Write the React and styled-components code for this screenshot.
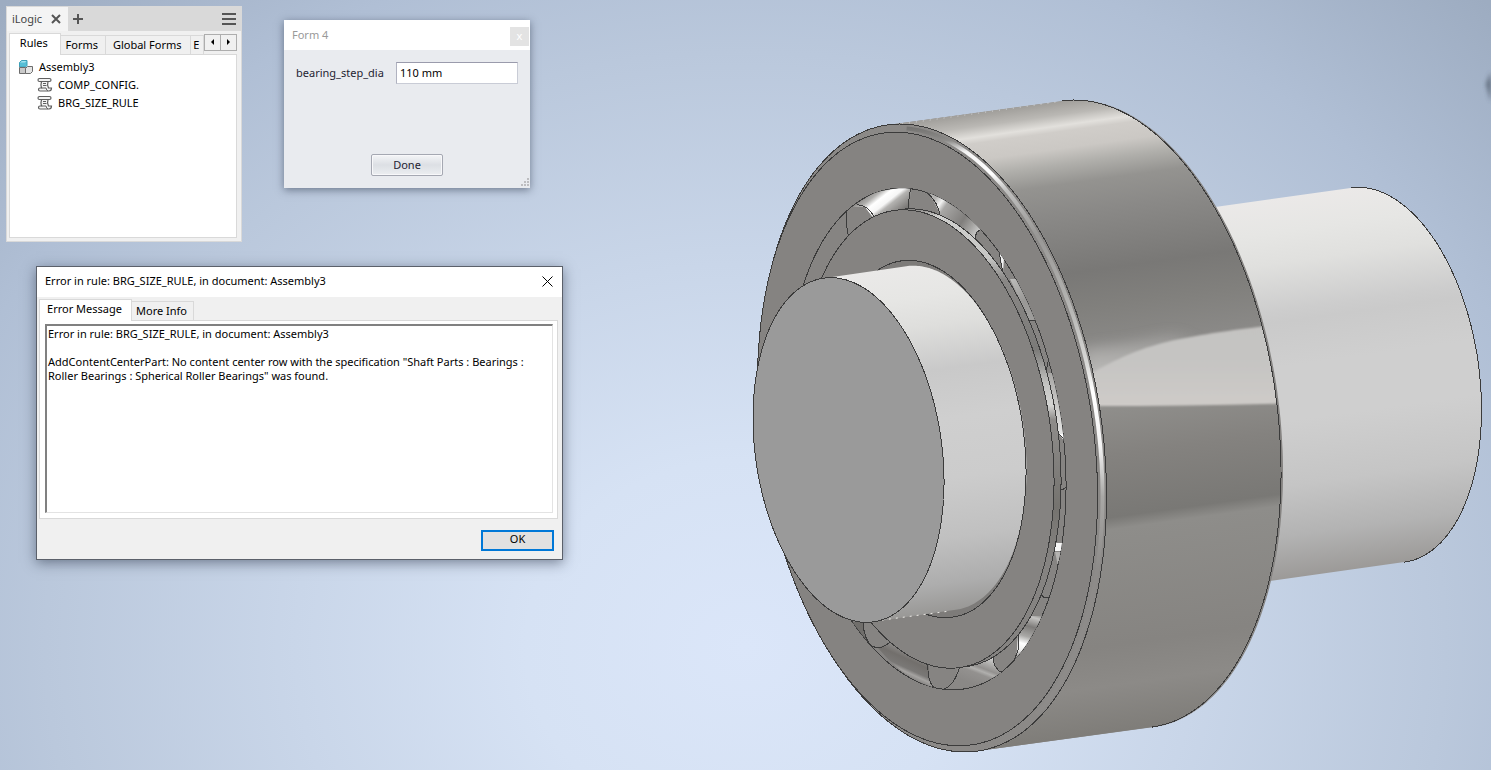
import React, { useState } from 'react'
import styled, { createGlobalStyle } from 'styled-components'

const colors = {
	line: '#3b3b3b',
	steel: '#858381',
	frame: '#d9d9d9',
	panel: '#f0f0f0',
	accent: '#0078d7',
}

// every circle of the model is seen at the same angle
const SKEW = 0.335
const TALL = 1.773

const point = (cx, cy, w, deg) => {
	const t = deg * Math.PI / 180
	const x = cx + w * Math.cos(t)
	const y = cy + SKEW * w * Math.cos(t) + TALL * w * Math.sin(t)
	return `${x.toFixed(1)} ${y.toFixed(1)}`
}

const arc = ([cx, cy, w], from, to) => {
	const points = []
	const step = from < to ? 1 : -1
	for (let deg = from; deg !== to + step; deg += step) {
		points.push(point(cx, cy, w, deg))
	}
	return points.join(' L')
}

const ring = (c) => `M${arc(c, 0, 360)} Z`
const tube = (front, back) => `M${arc(back, -105, 75)} L${arc(front, 75, 255)} Z`

const outerFront = [932.5, 438, 174]
const outerBack = [1107, 414, 174]
const outerRim = [1109, 414, 174]
const face = [927.5, 439, 170]
const opening = [927, 439, 139]
const innerRing = [927, 439, 127]
const innerRace = [934, 438, 127]
const bore = [927, 439, 99]
const shaftFront = [848.5, 450, 95.5]
const shaftEnd = [931, 438, 95.5]
const shoulderFront = [1000, 428, 104]
const shoulderBack = [1377.5, 375, 104]

// stops are given on the axis y + 0.139x, square to the cylinder sides
const Shade = ({ id, from, to, stops }) => (
	<linearGradient id={id} gradientUnits="userSpaceOnUse" x1="0" y1={from} x2={(to - from) * 0.1364} y2={from + (to - from) * 0.981}>
		{stops.map(([v, color]) => (
			<stop key={v} offset={(v - from) / (to - from)} stopColor={color} />
		))}
	</linearGradient>
)

const Fade = ({ id, x1, y1, x2, y2, stops }) => (
	<linearGradient id={id} gradientUnits="userSpaceOnUse" x1={x1} y1={y1} x2={x2} y2={y2}>
		{stops.map(([offset, color]) => (
			<stop key={offset} offset={offset} stopColor={color} />
		))}
	</linearGradient>
)

const Bearing = () => (
	<Scene viewBox="0 0 1491 770" preserveAspectRatio="xMidYMid slice" aria-hidden="true">
		<defs>
			<Shade id="outer" from={249} to={886} stops={[
				[249, '#a19f9b'], [262, '#bab8b4'], [273, '#e2e0dc'], [279, '#d0cdc9'], [296, '#cbc8c4'], [312, '#b0afab'],
				[332, '#949390'], [362, '#8a8987'], [422, '#797876'], [460, '#81807d'], [500, '#8a8987'], [558, '#908f8c'],
				[610, '#84827f'], [672, '#797875'], [684, '#8e8d8a'], [800, '#868481'], [840, '#8c8a87'], [886, '#7f7d79'],
			]} />
			<Shade id="shaft" from={392} to={743} stops={[
				[392, '#eae9e8'], [425, '#e6e6e4'], [455, '#dededc'], [500, '#c9c9c9'], [550, '#cfcfcf'], [610, '#cccccc'],
				[670, '#c0c0c0'], [715, '#adadad'], [743, '#999896'],
			]} />
			<Shade id="shoulder" from={375} to={759} stops={[
				[375, '#ebe9e8'], [410, '#e6e6e4'], [441, '#e0e0de'], [488, '#cdcdcd'], [500, '#cacaca'], [545, '#cfcfcf'],
				[600, '#cfcfcf'], [665, '#c5c5c5'], [715, '#b3b3b3'], [759, '#9b9997'],
			]} />
			<Fade id="lit" x1="0" y1="326" x2="0" y2="405" stops={[[0, '#c4c3c1'], [0.5, '#c6c5c3'], [1, '#cecbc8']]} />
			<Fade id="litTail" x1="0" y1="325" x2="0" y2="375" stops={[[0, '#c4c3c100'], [1, '#bdbcba']]} />
			<Fade id="chamfer" x1="0" y1="124" x2="0" y2="680" stops={[
				[0, '#6d6c6a'], [0.03, '#8d8c8a'], [0.05, '#f5f5f5'], [0.09, '#ffffff'], [0.12, '#c0c0bf'], [0.2, '#989795'],
				[0.34, '#b8b8b6'], [0.43, '#d8d8d6'], [0.48, '#ffffff'], [0.58, '#f4f4f4'], [0.67, '#a9a8a6'], [0.8, '#8d8b89'], [1, '#8d8b89'],
			]} />
			<Fade id="race" x1="0" y1="209" x2="0" y2="560" stops={[
				[0, '#858381'], [0.02, '#d0d0ce'], [0.14, '#c6c6c4'], [0.2, '#8a8886'], [0.4, '#7b7a78'], [0.5, '#c4c4c2'],
				[0.56, '#d4d4d2'], [0.6, '#8e8c8a'], [0.85, '#75736f'], [1, '#858381'],
			]} />
			<Fade id="gapA" x1="868" y1="192" x2="890" y2="220" stops={[
				[0, '#888684'], [0.2, '#b0afad'], [0.36, '#ffffff'], [0.55, '#f6f6f6'], [0.66, '#b4b3b1'], [1, '#7b7977'],
			]} />
			<Fade id="gapB" x1="934" y1="200" x2="982" y2="234" stops={[
				[0, '#b4b3b1'], [0.12, '#f2f2f1'], [0.22, '#a8a7a5'], [0.6, '#807e7c'], [0.78, '#a5a4a2'], [1, '#dcdcdb'],
			]} />
			<Fade id="gapC" x1="1010" y1="280" x2="1036" y2="322" stops={[[0, '#bcbcba'], [0.5, '#9a9997'], [1, '#9f9e9c']]} />
			<Fade id="gapD" x1="0" y1="372" x2="0" y2="436" stops={[[0, '#a8a7a5'], [0.3, '#bcbbb9'], [1, '#e6e6e5']]} />
			<Fade id="gapE" x1="1035" y1="614" x2="1022" y2="660" stops={[
				[0, '#8d8c8a'], [0.08, '#c4c3c1'], [0.28, '#7d7b79'], [0.5, '#a9a8a6'], [0.66, '#ffffff'], [0.8, '#f0f0ef'], [1, '#8d8b89'],
			]} />
			<Fade id="gapF" x1="990" y1="655" x2="978" y2="686" stops={[
				[0, '#dededd'], [0.3, '#a9a8a6'], [0.45, '#92908e'], [0.55, '#b0afad'], [0.65, '#93918f'], [1, '#8a8886'],
			]} />
			<Fade id="gapG" x1="912" y1="652" x2="902" y2="674" stops={[
				[0, '#8f8d8b'], [0.35, '#726f6c'], [0.7, '#7a7876'], [0.85, '#a5a3a1'], [1, '#8a8886'],
			]} />
			<clipPath id="inOuter"><path d={tube(outerFront, outerBack)} /></clipPath>
			<clipPath id="inOpening"><path d={ring(opening)} /></clipPath>
			<filter id="soft" x="-20%" y="-20%" width="140%" height="140%"><feGaussianBlur stdDeviation="9 6" /></filter>
			<filter id="edge" x="-50%" y="-20%" width="200%" height="140%"><feGaussianBlur stdDeviation="1" /></filter>
			<filter id="smudge" x="-100%" y="-50%" width="300%" height="200%"><feGaussianBlur stdDeviation="2" /></filter>
		</defs>

		<path d="M1486 84 L1491 72 V102 Z" fill="#4d5968" opacity="0.8" filter="url(#smudge)" />

		<path d={tube(shoulderFront, shoulderBack)} fill="url(#shoulder)" />
		<Edge d={`M${arc(shoulderBack, -105, 75)}`} />

		<path d={tube(outerFront, outerRim)} fill={colors.steel} />
		<path d={tube(outerFront, outerBack)} fill="url(#outer)" />
		<g clipPath="url(#inOuter)">
			<path d="M1080 348 L1130 342 L1175 332 L1195 345 L1150 390 L1080 390 Z" fill="url(#litTail)" filter="url(#soft)" />
			<path d="M1090 374 C1115 360 1140 347 1180 339 C1215 332 1240 329 1300 322 V403 Q1200 406 1090 406 Z" fill="url(#lit)" filter="url(#edge)" />
		</g>
		<Edge d={`M${arc(outerBack, -105, 75)}`} />
		<path d="M902 124 L1056 102" stroke="#d6d8dc" strokeDasharray="1 6" fill="none" />

		<path d={ring(outerFront)} fill="#8b8987" />
		<path d={`M${arc([930.5, 438.5, 172], -98, 52)}`} stroke="url(#chamfer)" strokeWidth="4" fill="none" />
		<Edge d={ring(outerFront)} />
		<Edge d={ring(face)} fill={colors.steel} />
		<Edge d={ring(opening)} fill="#868482" />

		<g clipPath="url(#inOpening)">
			<path d="M852 207 L875 192 L911 186 L909 212 L874 219 L865 207 Z" fill="url(#gapA)" />
			<path d="M925 190 Q958 196 983 229 L976 232 L975 240 L940 215 Q936 202 925 190 Z" fill="url(#gapB)" />
			<path d="M999 250 L1004 258 L1003 272 Z" fill="#f2f2f2" />
			<path d="M1010 279 L1017 279 L1037 321 L1029 320 Z" fill="url(#gapC)" />
			<path d="M1046 373 L1054 373 L1066 440 L1058 434 Z" fill="url(#gapD)" />
			<path d="M1059 434 L1066 434 L1065 442 Z" fill="#ffffff" />
			<path d="M1053 543 L1063 543 L1062 551 L1053 551 Z" fill="#f6f6f6" />
			<path d="M1055 552 L1061 552 L1058 566 Z" fill="#b4b3b1" />
			<path d="M1027 616 L1042 616 L1030 644 L1015 662 L1017 650 L1018 632 Z" fill="url(#gapE)" />
			<path d="M958 666 L993 655 L995 667 L1002 673 Q974 690 945 689 Q956 681 958 666 Z" fill="url(#gapF)" />
			<path d="M890 642 Q910 658 929 664 L929 680 L935 688 Q905 680 878 648 Z" fill="url(#gapG)" />
			<path d="M852 622 L863 622 L865 637 L871 646 Z" fill="#706e6b" />
			<Edge d="M857 205 Q867 204 875 218 M847 212 Q846 230 849 238" />
			<Edge d="M911 188 Q908 198 909 212 M925 191 Q938 201 940 215" />
			<Edge d="M983 229 Q975 230 975 240 M999 250 Q1000 260 1003 272" />
			<Edge d="M1028 320 H1034 L1037 323 M1049 356 L1046 373" />
			<Edge d="M1058 434 Q1062 435 1065 442 M1060 490 Q1064 490 1067 486" />
			<Edge d="M1062 551 L1057 568 M1041 594 Q1044 600 1050 597" />
			<Edge d="M1018 632 L1018 650 L1014 661 M993 656 Q993 668 1002 673" />
			<Edge d="M928 663 Q927 684 936 689 M960 666 Q954 686 944 689" />
			<Edge d="M863 622 Q864 640 872 646 Q881 651 891 641" />
		</g>

		<Edge d={ring(innerRace)} fill="url(#race)" />
		<Edge d={ring(innerRing)} fill={colors.steel} />
		<Edge d={ring(bore)} fill="#7d7b79" />
		<path d={`M${arc(shaftEnd, -105, 75)} L${arc(shaftFront, 75, -105)} Z`} fill="url(#shaft)" />
		<Edge d={`M${arc(bore, -82, 60)}`} />
		<path d="M875 621 L950 611" stroke="#eceae6" strokeDasharray="2 5" fill="none" />
		<Edge d={ring(shaftFront)} fill="#9a9a9a" />
	</Scene>
)

const ScrollIcon = () => (
	<Icon viewBox="0 0 16 16">
		<path d="M2.500 1.500 H12.500 Q14 1.500 14 3 Q14 4.500 12.500 4.500 H11 Q10 7.500 11.500 11 H14.500 Q14.500 14 12 14 H3 Q1.500 14 1.500 12.500 Q1.500 11 3 11 H4.500 Q3.500 7.500 4.500 4.500 H2.500 Q1 4.500 1 3 Q1 1.500 2.500 1.500 Z" fill="#f4f4f4" stroke="#5f5f5f" strokeWidth="1.200" />
		<path d="M4.500 4.500 H11 M4.500 11 H9 Q9.500 13.500 11 14 M6 6.500 H9 M6 8.500 H9.500" stroke="#5f5f5f" />
	</Icon>
)

const AssemblyIcon = () => (
	<Icon viewBox="0 0 16 16">
		<path d="M1.500 3.500 L3.500 1.500 H9 V6.500 L7.500 8 H1.500 Z" fill="#57bfd6" stroke="#3d9fb8" />
		<path d="M2 3.500 L4 2 H8.500 L7 3.500 Z" fill="#a4e4f0" />
		<path d="M1.500 8.500 H7.500 V14.500 H1.500 Z" fill="#c9c9c9" stroke="#6c6c6c" />
		<path d="M7.500 9.500 L9.500 7.500 H14.500 V12.500 L12.500 14.500 H7.500 Z" fill="#e4e4e4" stroke="#6c6c6c" />
	</Icon>
)

const message = `Error in rule: BRG_SIZE_RULE, in document: Assembly3

AddContentCenterPart: No content center row with the specification "Shaft Parts : Bearings :
Roller Bearings : Spherical Roller Bearings" was found.`

const rules = ['COMP_CONFIG.', 'BRG_SIZE_RULE']

export default function App () {
	const [diameter, setDiameter] = useState('110 mm')

	return (
		<Desktop>
			<GlobalStyle />
			<Bearing />

			<LogicPanel>
				<PanelBar>
					<PanelTab>
						iLogic
						<BarButton aria-label="Close iLogic">
							<svg width="10" height="10"><path d="M1 1 L9 9 M9 1 L1 9" stroke="#555" strokeWidth="2" /></svg>
						</BarButton>
					</PanelTab>
					<BarButton aria-label="Add panel">
						<svg width="20" height="12"><path d="M10 1 V11 M5 6 H15" stroke="#555" strokeWidth="2" /></svg>
					</BarButton>
					<MenuButton aria-label="Menu">
						<svg width="14" height="12"><path d="M0 1 H14 M0 6 H14 M0 11 H14" stroke="#555" strokeWidth="2" /></svg>
					</MenuButton>
				</PanelBar>
				<PanelBody>
					<Tabs>
						<Tab $active $width={52}>Rules</Tab>
						<Tab $width={46}>Forms</Tab>
						<Tab $width={86}>Global Forms</Tab>
						<Tab $width={13}>E</Tab>
						<ArrowButton aria-label="Scroll tabs left">
							<svg width="3" height="6"><path d="M3 0 V6 L0 3 Z" /></svg>
						</ArrowButton>
						<ArrowButton aria-label="Scroll tabs right">
							<svg width="3" height="6"><path d="M0 0 V6 L3 3 Z" /></svg>
						</ArrowButton>
					</Tabs>
					<Tree>
						<TreeItem><AssemblyIcon />Assembly3</TreeItem>
						{rules.map(rule => (
							<TreeItem key={rule} $nested><ScrollIcon />{rule}</TreeItem>
						))}
					</Tree>
				</PanelBody>
			</LogicPanel>

			<FormWindow>
				<FormTitle>
					Form 4
					<FormClose aria-label="Close form">x</FormClose>
				</FormTitle>
				<FormRow>
					<label htmlFor="step-dia">bearing_step_dia</label>
					<Field id="step-dia" value={diameter} onChange={e => setDiameter(e.target.value)} />
				</FormRow>
				<DoneButton>Done</DoneButton>
				<Grip width="9" height="9">
					<path d="M7 0h2v2h-2z M7 3h2v2h-2z M4 3h2v2h-2z M7 6h2v2h-2z M4 6h2v2h-2z M1 6h2v2h-2z" fill="#bdbdc0" />
				</Grip>
			</FormWindow>

			<ErrorDialog role="dialog" aria-labelledby="error-title">
				<DialogTitle>
					<span id="error-title">Error in rule: BRG_SIZE_RULE, in document: Assembly3</span>
					<BarButton aria-label="Close dialog">
						<svg width="11" height="11"><path d="M0.500 0.500 L10.500 10.500 M10.500 0.500 L0.500 10.500" stroke="#000" /></svg>
					</BarButton>
				</DialogTitle>
				<DialogTabs>
					<Tab $active $width={93}>Error Message</Tab>
					<Tab $width={62}>More Info</Tab>
				</DialogTabs>
				<MessagePane>
					<Message aria-label="Error message" readOnly value={message} />
				</MessagePane>
				<OkButton>OK</OkButton>
			</ErrorDialog>
		</Desktop>
	)
}

const GlobalStyle = createGlobalStyle`
	* {
		box-sizing: border-box;
	}

	body {
		margin: 0;
		overflow: hidden;
	}

	body, button, input, textarea {
		font: 11px/14px "Noto Sans", "Open Sans", sans-serif;
		color: #000;
	}

	button {
		padding: 0;
		border: 0;
		background: none;
	}
`

const Desktop = styled.main`
	position: relative;
	min-height: 100vh;
	background: radial-gradient(1000px 850px at 50% 84%, #dbe6f9 0%, #d6e2f4 22%, #c9d6e9 45%, #bac8dc 70%, #b0bfd5 84%, #9dacc1 106%);
`

const Scene = styled.svg`
	position: absolute;
	width: 100%;
	height: 100%;
`

const Edge = styled.path.attrs(props => ({ fill: props.fill || 'none' }))`
	stroke: ${colors.line};
	stroke-width: 1;
	shape-rendering: crispEdges;
`

const Icon = styled.svg`
	width: 16px;
	height: 16px;
	flex: none;
	fill: none;
`

const LogicPanel = styled.section`
	position: absolute;
	left: 6px;
	top: 6px;
	width: 236px;
	height: 236px;
	display: flex;
	flex-direction: column;
	border: 1px solid ${colors.frame};
	background: ${colors.panel};
`

const PanelBar = styled.header`
	display: flex;
	height: 24px;
	background: ${colors.frame};
`

const BarButton = styled.button`
	display: grid;
	place-items: center;
`

const PanelTab = styled.div`
	display: flex;
	align-items: center;
	gap: 9px;
	padding: 0 7px 0 5px;
	background: #f4f4f4;
	color: #444;
`

const MenuButton = styled(BarButton)`
	margin-left: auto;
	padding-right: 5px;
`

const PanelBody = styled.div`
	flex: 1;
	display: flex;
	flex-direction: column;
	padding: 1px 4px 3px 2px;
`

const Tabs = styled.div`
	display: flex;
	align-items: flex-end;
	height: 22px;
`

const Tab = styled.button`
	position: relative;
	width: ${props => props.$width}px;
	height: ${props => props.$active ? 22 : 19}px;
	margin-bottom: ${props => props.$active ? -1 : 0}px;
	padding: ${props => props.$active ? '0 2px 3px 0' : '0 2px 0 0'};
	overflow: hidden;
	border: 1px solid ${colors.frame};
	border-width: ${props => props.$active ? '1px 1px 0' : '1px 1px 0 0'};
	background: ${props => props.$active ? '#fff' : colors.panel};
`

const ArrowButton = styled.button`
	width: 17px;
	height: 17px;
	margin-bottom: 3px;
	padding-bottom: 2px;
	display: grid;
	place-items: center;
	border: 1px solid #adadad;
	background: ${colors.panel};

	& + & {
		margin-left: -1px;
	}
`

const Tree = styled.ul`
	flex: 1;
	margin: 0;
	padding: 3px 0 0 8px;
	border: 1px solid ${colors.frame};
	background: #fff;
	list-style: none;
`

const TreeItem = styled.li`
	display: flex;
	align-items: center;
	gap: 5px;
	height: 18px;
	padding-left: ${props => props.$nested ? 19 : 0}px;
`

const FormWindow = styled.section`
	position: absolute;
	left: 284px;
	top: 20px;
	width: 246px;
	height: 168px;
	background: #e9ebef;
	color: #1e1e32;
	box-shadow: 0 2px 8px rgba(30, 40, 60, 0.5);
`

const FormTitle = styled.header`
	display: flex;
	align-items: center;
	justify-content: space-between;
	height: 30px;
	padding: 0 1px 0 8px;
	background: #fff;
	color: #999;
	font-size: 11px;
`

const FormClose = styled.button`
	width: 19px;
	height: 19px;
	margin-top: 3px;
	padding-bottom: 2px;
	background: #e3e3e3;
	color: #fff;
`

const FormRow = styled.div`
	display: flex;
	align-items: center;
	justify-content: space-between;
	padding: 12px 12px 0;
`

const Field = styled.input`
	width: 122px;
	height: 22px;
	padding: 0 3px 2px;
	border: 1px solid #c9ccd6;
	border-top-color: #9a9bac;
	border-left-color: #b0b2c0;
	background: #fff;
`

const DoneButton = styled.button`
	display: block;
	width: 72px;
	height: 22px;
	margin: 70px auto 0 87px;
	border: 1px solid #a5a8b2;
	border-radius: 2px;
	background: linear-gradient(#f4f5f7, #dcdfe4 50%, #eceef1);
	box-shadow: inset 0 0 0 1px #f8f8fa;
	color: #1e1e32;
`

const Grip = styled.svg`
	position: absolute;
	right: 1px;
	bottom: 1px;
`

const ErrorDialog = styled.section`
	position: absolute;
	left: 36px;
	top: 266px;
	width: 527px;
	height: 294px;
	display: flex;
	flex-direction: column;
	border: 1px solid #5b606a;
	background: ${colors.panel};
	box-shadow: 0 3px 12px rgba(30, 40, 60, 0.5);
`

const DialogTitle = styled.header`
	display: flex;
	align-items: center;
	justify-content: space-between;
	height: 30px;
	padding: 0 9px 2px 8px;
	background: #fff;
`

const DialogTabs = styled(Tabs)`
	height: 23px;
	padding-left: 2px;
`

const MessagePane = styled.div`
	flex: 1;
	display: flex;
	margin: 0 4px 0 2px;
	padding: 3px 4px 5px 5px;
	border: 1px solid ${colors.frame};
	background: #fff;
`

const Message = styled.textarea`
	flex: 1;
	padding: 1px 0 0 1px;
	border: 1px solid #e3e3e3;
	border-top: 2px solid #808080;
	border-left: 2px solid #808080;
	resize: none;
	outline: 0;
	overflow: hidden;
	background: #fff;
`

const OkButton = styled.button`
	align-self: flex-end;
	width: 73px;
	height: 21px;
	margin: 11px 8px 8px 0;
	padding-bottom: 3px;
	border: 2px solid ${colors.accent};
	background: #e1e1e1;
`
